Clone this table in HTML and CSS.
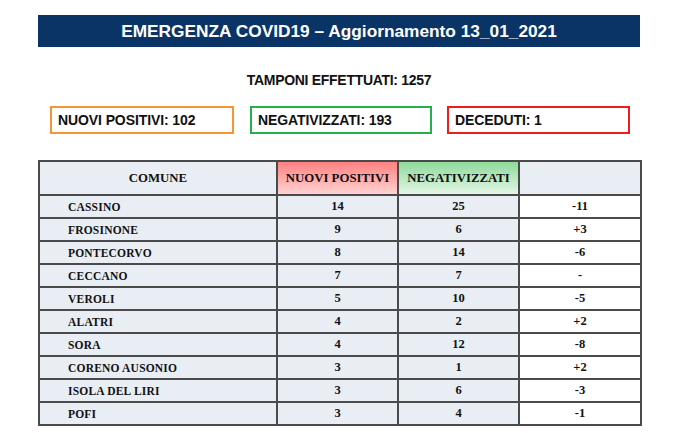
FILE: index.html
```html
<!DOCTYPE html>
<html lang="it">
<head>
<meta charset="utf-8">
<title>Emergenza COVID19</title>
<link rel="stylesheet" href="styles.css">
</head>
<body>
<div class="page">
  <div class="banner">EMERGENZA COVID19 – Aggiornamento 13_01_2021</div>
  <div class="tamponi">TAMPONI EFFETTUATI: 1257</div>
  <div class="boxes">
    <div class="box box-orange">NUOVI POSITIVI: 102</div>
    <div class="box box-green">NEGATIVIZZATI: 193</div>
    <div class="box box-red">DECEDUTI: 1</div>
  </div>
  <table class="data">
    <colgroup>
      <col class="c1"><col class="c2"><col class="c3"><col class="c4">
    </colgroup>
    <thead>
      <tr>
        <th>COMUNE</th>
        <th class="h-red">NUOVI POSITIVI</th>
        <th class="h-green">NEGATIVIZZATI</th>
        <th></th>
      </tr>
    </thead>
    <tbody>
      <tr><td class="name">CASSINO</td><td>14</td><td>25</td><td class="diff">-11</td></tr>
      <tr><td class="name">FROSINONE</td><td>9</td><td>6</td><td class="diff">+3</td></tr>
      <tr><td class="name">PONTECORVO</td><td>8</td><td>14</td><td class="diff">-6</td></tr>
      <tr><td class="name">CECCANO</td><td>7</td><td>7</td><td class="diff">-</td></tr>
      <tr><td class="name">VEROLI</td><td>5</td><td>10</td><td class="diff">-5</td></tr>
      <tr><td class="name">ALATRI</td><td>4</td><td>2</td><td class="diff">+2</td></tr>
      <tr><td class="name">SORA</td><td>4</td><td>12</td><td class="diff">-8</td></tr>
      <tr><td class="name">CORENO AUSONIO</td><td>3</td><td>1</td><td class="diff">+2</td></tr>
      <tr><td class="name">ISOLA DEL LIRI</td><td>3</td><td>6</td><td class="diff">-3</td></tr>
      <tr><td class="name">POFI</td><td>3</td><td>4</td><td class="diff">-1</td></tr>
    </tbody>
  </table>
</div>
</body>
</html>
```

FILE: styles.css
```css
html, body {
  margin: 0;
  padding: 0;
  background: #ffffff;
}
.page {
  width: 602px;
  margin-left: 38px;
  padding-top: 15px;
  font-family: "Liberation Sans", Arial, sans-serif;
}
.banner {
  height: 32px;
  background: #0b3466;
  color: #ffffff;
  font-weight: bold;
  font-size: 17.3px;
  display: flex;
  align-items: center;
  justify-content: center;
}
.tamponi {
  margin-top: 25px;
  text-align: center;
  font-weight: bold;
  font-size: 14px;
  letter-spacing: -0.3px;
  color: #111;
  line-height: 16px;
}
.boxes {
  display: flex;
  gap: 16px;
  padding-left: 12px;
  margin-top: 18px;
}
.box {
  box-sizing: border-box;
  height: 28px;
  border: 2px solid;
  display: flex;
  align-items: center;
  padding-left: 6px;
  font-weight: bold;
  font-size: 14px;
  letter-spacing: -0.1px;
  color: #111;
}
.box-orange { width: 184px; border-color: #f79533; }
.box-green { width: 182px; border-color: #22b14c; }
.box-red { width: 183px; border-color: #ee1c1c; margin-left: -1px; }
.data {
  margin-top: 26px;
  width: 602px;
  border-collapse: collapse;
  table-layout: fixed;
  font-family: "Liberation Serif", "Times New Roman", serif;
  font-weight: bold;
  color: #111;
}
.c1 { width: 238px; }
.c2 { width: 121px; }
.c3 { width: 121px; }
.c4 { width: 122px; }
.data th, .data td {
  border: 2px solid #4a4a4a;
  padding: 0;
  text-align: center;
}
.data th {
  height: 32px;
  background: #e9edf4;
  font-size: 12.8px;
  font-weight: bold;
}
.data th.h-red {
  background: linear-gradient(to bottom, #ff8181, #ffd1d1);
}
.data th.h-green {
  background: linear-gradient(to bottom, #8ed99a, #e3f6e5);
}
.data td {
  height: 21px;
  font-size: 12.5px;
  background: #e9edf4;
}
.data td.name {
  text-align: left;
  padding-left: 28px;
  font-size: 11.5px;
  letter-spacing: 0.2px;
}
.data td.diff {
  background: #ffffff;
}
```
